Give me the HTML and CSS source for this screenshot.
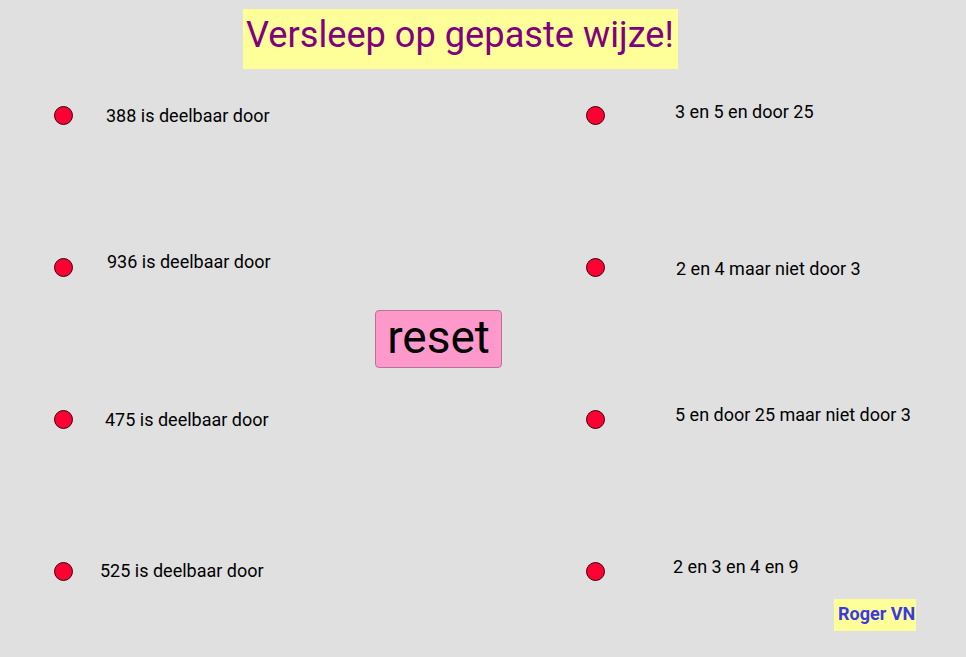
FILE: index.html
```html
<!DOCTYPE html>
<html lang="nl">
<head>
<meta charset="utf-8">
<title>Versleep op gepaste wijze!</title>
<link rel="stylesheet" href="styles.css">
</head>
<body>
<main class="canvas">
  <h1 class="title">Versleep op gepaste wijze!</h1>

  <span class="pt pt-l r1"></span>
  <span class="pt pt-l r2"></span>
  <span class="pt pt-l r3"></span>
  <span class="pt pt-l r4"></span>
  <span class="pt pt-r r1"></span>
  <span class="pt pt-r r2"></span>
  <span class="pt pt-r r3"></span>
  <span class="pt pt-r r4"></span>

  <span class="lbl l1">388 is deelbaar door</span>
  <span class="lbl l2">936 is deelbaar door</span>
  <span class="lbl l3">475 is deelbaar door</span>
  <span class="lbl l4">525 is deelbaar door</span>

  <span class="lbl q1">3 en 5 en door 25</span>
  <span class="lbl q2">2 en 4 maar niet door 3</span>
  <span class="lbl q3">5 en door 25 maar niet door 3</span>
  <span class="lbl q4">2 en 3 en 4 en 9</span>

  <button class="reset" type="button">reset</button>

  <span class="author">Roger VN</span>
</main>
</body>
</html>
```

FILE: styles.css
```css
html, body {
  margin: 0;
  padding: 0;
}
body {
  background: #e0e0e0;
  font-family: Roboto, "Noto Sans", sans-serif;
  overflow: hidden;
}
.canvas {
  position: relative;
  width: 966px;
  height: 657px;
  background: #e0e0e0;
}
.title {
  position: absolute;
  left: 243px;
  top: 9px;
  width: 435px;
  height: 60px;
  box-sizing: border-box;
  margin: 0;
  padding: 8px 0 0 3px;
  background: #ffff99;
  color: #800080;
  font-weight: 400;
  font-size: 36.2px;
  line-height: 1;
  white-space: nowrap;
}
.pt {
  position: absolute;
  width: 19px;
  height: 19px;
  box-sizing: border-box;
  border-radius: 50%;
  background: #ff0033;
  border: 1px solid #3a0010;
}
.pt-l { left: 54px; }
.pt-r { left: 586px; }
.pt.r1 { top: 106px; }
.pt.r2 { top: 258px; }
.pt.r3 { top: 410px; }
.pt.r4 { top: 562px; }

.lbl {
  position: absolute;
  font-size: 18px;
  line-height: 1;
  color: #000;
  white-space: nowrap;
}
.l1 { left: 106px; top: 107px; }
.l2 { left: 107px; top: 253px; }
.l3 { left: 105px; top: 411px; }
.l4 { left: 100px; top: 562px; }
.q1 { left: 675px; top: 103px; }
.q2 { left: 676px; top: 260px; }
.q3 { left: 675px; top: 406px; }
.q4 { left: 673px; top: 558px; }

.reset {
  position: absolute;
  left: 375px;
  top: 310px;
  width: 127px;
  height: 58px;
  box-sizing: border-box;
  margin: 0;
  padding: 0 0 4px 0;
  background: #ff99cc;
  border: 1px solid #b87393;
  border-radius: 4px;
  font-family: Roboto, "Noto Sans", sans-serif;
  font-size: 46px;
  line-height: 1;
  color: #000;
  text-align: center;
  display: block;
}
.author {
  position: absolute;
  left: 834px;
  top: 599px;
  width: 82px;
  height: 32px;
  box-sizing: border-box;
  padding: 6px 0 0 4px;
  background: #ffff99;
  color: #3a3ae0;
  font-weight: 700;
  font-size: 18px;
  line-height: 1;
  white-space: nowrap;
}
```
